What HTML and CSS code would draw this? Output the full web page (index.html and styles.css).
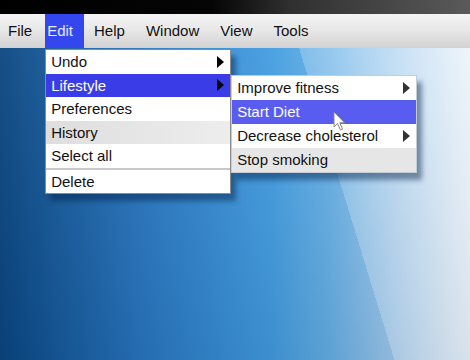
FILE: index.html
```html
<!DOCTYPE html>
<html lang="en">
<head>
    <meta charset="UTF-8">
    <meta name="viewport" content="width=device-width, initial-scale=1.0">
    <title>Edit menu</title>
    <link rel="stylesheet" href="styles.css">
</head>
<body>
    <div class="topbar"></div>
    <nav class="menubar">
        <div class="menu-item">File</div>
        <div class="menu-item open">Edit
            <!-- Edit dropdown -->
            <ul class="dropdown">
                <li class="entry has-sub">Undo</li>
                <li class="entry has-sub active">Lifestyle
                    <ul class="submenu">
                        <li class="entry has-sub">Improve fitness</li>
                        <li class="entry active">Start Diet</li>
                        <li class="entry has-sub">Decrease cholesterol</li>
                        <li class="entry shaded">Stop smoking</li>
                    </ul>
                </li>
                <li class="entry">Preferences</li>
                <li class="entry shaded">History</li>
                <li class="entry">Select all</li>
                <li class="entry separated">Delete</li>
            </ul>
        </div>
        <div class="menu-item">Help</div>
        <div class="menu-item">Window</div>
        <div class="menu-item">View</div>
        <div class="menu-item">Tools</div>
    </nav>

    <svg class="cursor" width="14" height="21" viewBox="0 0 14 21">
        <path d="M1 1 L1 16 L4.5 12.5 L7.5 19 L9.5 18 L6.8 11.8 L11.5 11.8 Z" fill="#fff" stroke="#8a8a8a" stroke-width="1" stroke-linejoin="round"/>
    </svg>
</body>
</html>
```

FILE: styles.css
```css
body {
    margin: 0;
    width: 470px;
    height: 360px;
    overflow: hidden;
    position: relative;
    font-family: "Liberation Sans", Arial, sans-serif;
    background:
        linear-gradient(73deg, rgba(255, 255, 255, 0) 68%, rgba(255, 255, 255, 0.22) 68%, rgba(255, 255, 255, 0.45) 100%),
        linear-gradient(180deg, rgba(255, 255, 255, 0.06) 0%, rgba(0, 20, 50, 0.12) 100%),
        linear-gradient(90deg, #0a4680 0%, #165b9c 12%, #2a78c2 30%, #3a92da 48%, #45a0e4 58%, #6ab4ea 70%, #a6d0f2 84%, #e4f0fb 100%);
}
.topbar {
    height: 14px;
    background: linear-gradient(90deg, #000 0%, #050505 45%, #303030 62%, #5a5a5a 100%);
}
.menubar {
    display: flex;
    height: 34px;
    padding-left: 6px;
    background: linear-gradient(180deg, #f4f4f4 0%, #e8e8e8 45%, #d2d2d2 100%);
    font-size: 15px;
    line-height: 34px;
    color: #111;
}
.menu-item {
    position: relative;
    padding: 0 11px 0 2px;
    margin-right: 8px;
}
.menu-item:first-child {
    margin-right: 2px;
}
.menu-item.open {
    background-color: #3446ee;
    color: #e8ecff;
}
.dropdown,
.submenu {
    list-style: none;
    margin: 0;
    padding: 0;
    position: absolute;
    width: 184px;
    background-color: #fff;
    color: #111;
    box-shadow: 5px 7px 5px rgba(0, 30, 70, 0.45);
}
.dropdown {
    top: 100%;
    left: 0;
    margin-top: 1px;
    border: 1px solid #8c8c8c;
    font-size: 15px;
    line-height: 23.5px;
}
.submenu {
    top: 1px;
    left: calc(100% + 1px);
    border: 1px solid #c4ccd4;
    line-height: 24px;
}
.entry {
    position: relative;
    padding-left: 5px;
}
.entry.has-sub::after {
    content: "";
    position: absolute;
    right: 6px;
    top: 50%;
    margin-top: -6px;
    border-left: 7px solid #000;
    border-top: 6px solid transparent;
    border-bottom: 6px solid transparent;
}
.submenu .entry.has-sub::after {
    border-left-color: #333;
}
.entry.active {
    background-color: #3a3ce8;
    color: #fff;
}
.submenu .entry.active {
    background-color: #5a5cf0;
}
.entry.shaded {
    background: linear-gradient(90deg, #dedede, #ededed);
}
.submenu .entry.shaded {
    background: #e6e6e6;
}
.entry.separated {
    border-top: 2px solid #c8c8c8;
}
.cursor {
    position: absolute;
    left: 333px;
    top: 111px;
}
```
